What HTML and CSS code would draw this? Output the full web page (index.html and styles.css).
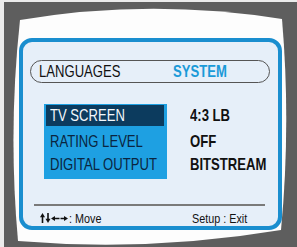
FILE: index.html
```html
<!DOCTYPE html>
<html lang="en">
<head>
    <meta charset="UTF-8">
    <title>Setup - System</title>
    <link rel="stylesheet" href="styles.css">
</head>
<body>
    <div class="ekran">
        <svg class="cerceve" width="297" height="247" viewBox="0 0 297 247">
            <rect x="0" y="0" width="297" height="247" fill="#5e5e5e"/>
            <rect x="0" y="0" width="4" height="247" fill="#ebebeb"/>
            <rect x="0" y="0" width="297" height="2" fill="#ebebeb"/>
            <path d="M20,20 Q150,-2 282,19 Q291,125 281,230 Q150,252 18,241 Q8,130 20,20 Z" fill="#fdfdfd"/>
        </svg>

        <div class="panel">
            <div class="sekmeler">
                <span class="sekme"><span class="dar">LANGUAGES</span></span>
                <span class="sekme aktif"><span class="dar">SYSTEM</span></span>
            </div>

            <div class="menu">
                <div class="secenekler">
                    <div class="satir secili"><span class="dar">TV SCREEN</span></div>
                    <div class="satir"><span class="dar">RATING LEVEL</span></div>
                    <div class="satir"><span class="dar">DIGITAL OUTPUT</span></div>
                </div>
                <div class="degerler">
                    <div class="satir secili"><span class="dar">4:3 LB</span></div>
                    <div class="satir"><span class="dar">OFF</span></div>
                    <div class="satir"><span class="dar">BITSTREAM</span></div>
                </div>
            </div>

            <div class="alt">
                <div class="ipucu">
                    <svg class="oklar" width="28" height="10" viewBox="0 0 28 10">
                        <path d="M2.5,10 V3" stroke="#111" stroke-width="1.6"/>
                        <path d="M0,4.2 L2.5,0 L5,4.2 Z" fill="#111"/>
                        <path d="M8,0 V7" stroke="#111" stroke-width="1.6"/>
                        <path d="M5.5,5.8 L8,10 L10.5,5.8 Z" fill="#111"/>
                        <path d="M14,5.5 H19.5" stroke="#111" stroke-width="1.5"/>
                        <path d="M11,5.5 L15,3 L15,8 Z" fill="#111"/>
                        <path d="M20.5,5.5 H25" stroke="#111" stroke-width="1.5"/>
                        <path d="M28,5.5 L24,3 L24,8 Z" fill="#111"/>
                    </svg>
                    <span class="dar">: Move</span>
                </div>
                <div class="ipucu"><span class="dar">Setup : Exit</span></div>
            </div>
        </div>
    </div>
</body>
</html>
```

FILE: styles.css
```css
html {
    background-color: #5e5e5e;
}

body {
    margin: 0;
    padding: 0;
    width: 297px;
    height: 247px;
    overflow: hidden;
    background-color: #5e5e5e;
    font-family: "Liberation Sans", Arial, sans-serif;
    color: #111;
}

.ekran {
    position: relative;
    width: 297px;
    height: 247px;
    padding-top: 38px;
    box-sizing: border-box;
}

.cerceve {
    position: absolute;
    left: 0;
    top: 0;
}

/* metin dar yazı tipi gibi görünsün */
.dar {
    display: inline-block;
    transform: scaleX(0.77);
    transform-origin: left center;
    white-space: nowrap;
}

.panel {
    position: relative;
    box-sizing: border-box;
    width: 263px;
    height: 192px;
    margin-left: 19px;
    padding-top: 18px;
    border: 4px solid #1a8ecf;
    border-radius: 13px;
    background-color: #e6eff9;
}

.sekmeler {
    display: grid;
    grid-template-columns: 134px 1fr;
    align-items: center;
    box-sizing: border-box;
    width: 240px;
    height: 23px;
    margin-left: 7px;
    padding-left: 8px;
    border: 1px solid #555;
    border-radius: 12px;
    font-size: 17px;
}

.aktif {
    color: #1a9ad8;
    font-weight: bold;
}

.menu {
    display: flex;
    margin-top: 21px;
}

.secenekler {
    box-sizing: border-box;
    width: 123px;
    height: 75px;
    margin-left: 21px;
    padding: 1px 3px 0 2px;
    background-color: #1ea0e2;
    color: #0a2540;
}

.satir {
    height: 23px;
    line-height: 23px;
    font-size: 17px;
    padding-left: 4px;
    white-space: nowrap;
}

.satir.secili {
    height: 21px;
    line-height: 21px;
    margin-bottom: 4px;
}

.secenekler .secili {
    background-color: #0c3b5e;
    color: #f4f8fc;
}

.degerler {
    margin-left: 19px;
    padding-top: 1px;
    font-weight: bold;
}

.alt {
    display: flex;
    justify-content: space-between;
    width: 231px;
    margin: 25px 0 0 11px;
    padding: 6px 17px 0 6px;
    box-sizing: border-box;
    border-top: 2px solid #7a7a7a;
    font-size: 13.5px;
}

.ipucu {
    display: flex;
    align-items: center;
    height: 12px;
}

.ipucu:last-child {
    width: 56px;
}

.oklar {
    margin-right: 1px;
}

.ipucu .dar {
    transform: scaleX(0.8);
}
```
